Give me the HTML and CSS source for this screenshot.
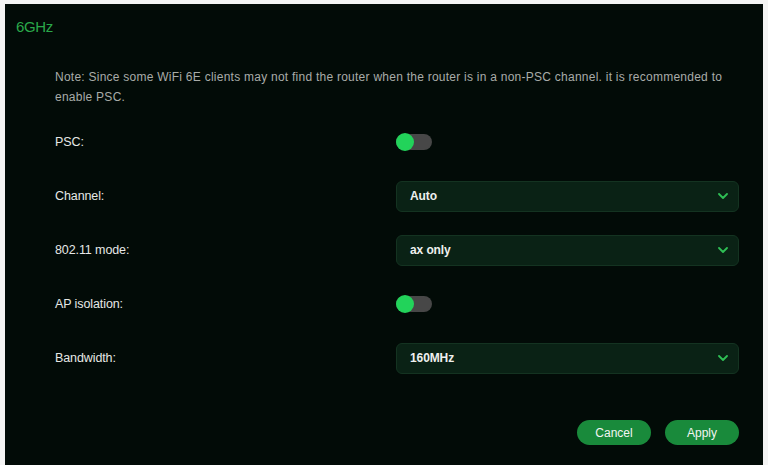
FILE: index.html
```html
<!DOCTYPE html>
<html>
<head>
<meta charset="utf-8">
<link rel="stylesheet" href="styles.css">
</head>
<body>
<div class="panel">
  <div class="header">6GHz</div>
  <div class="content">
    <p class="note">Note: Since some WiFi 6E clients may not find the router when the router is in a non-PSC channel. it is recommended to enable PSC.</p>
    <div class="row">
      <div class="label">PSC:</div>
      <div class="control"><span class="toggle"><span class="knob"></span></span></div>
    </div>
    <div class="row">
      <div class="label">Channel:</div>
      <div class="control"><div class="select"><span>Auto</span><svg class="chev" viewBox="0 0 10 6" width="10" height="6"><path d="M1 1l4 4 4-4" fill="none" stroke="#2fbf55" stroke-width="1.8" stroke-linecap="round" stroke-linejoin="round"/></svg></div></div>
    </div>
    <div class="row">
      <div class="label">802.11 mode:</div>
      <div class="control"><div class="select"><span>ax only</span><svg class="chev" viewBox="0 0 10 6" width="10" height="6"><path d="M1 1l4 4 4-4" fill="none" stroke="#2fbf55" stroke-width="1.8" stroke-linecap="round" stroke-linejoin="round"/></svg></div></div>
    </div>
    <div class="row">
      <div class="label">AP isolation:</div>
      <div class="control"><span class="toggle"><span class="knob"></span></span></div>
    </div>
    <div class="row">
      <div class="label">Bandwidth:</div>
      <div class="control"><div class="select"><span>160MHz</span><svg class="chev" viewBox="0 0 10 6" width="10" height="6"><path d="M1 1l4 4 4-4" fill="none" stroke="#2fbf55" stroke-width="1.8" stroke-linecap="round" stroke-linejoin="round"/></svg></div></div>
    </div>
    <div class="actions">
      <button class="btn">Cancel</button>
      <button class="btn">Apply</button>
    </div>
  </div>
</div>
</body>
</html>
```
FILE: styles.css
```css
html, body {
  margin: 0;
  padding: 0;
  background: #f4f4f4;
  height: 100%;
}
body {
  font-family: "Liberation Sans", Arial, sans-serif;
  padding: 4px 5px 0 5px;
  box-sizing: border-box;
}
.panel {
  background: #020b07;
  height: 100%;
  box-sizing: border-box;
  padding-top: 13px;
}
.header {
  color: #2aa84a;
  font-size: 15px;
  line-height: 20px;
  padding-left: 11px;
  letter-spacing: -0.4px;
}
.content {
  padding: 0 24px 0 50px;
}
.note {
  margin: 30px 0 8px 0;
  color: #a9aca9;
  font-size: 12px;
  line-height: 20px;
  letter-spacing: 0.25px;
  padding-right: 8px;
}
.row {
  display: flex;
  align-items: center;
  height: 54px;
}
.label {
  width: 341px;
  color: #e6e8e6;
  font-size: 12.5px;
  letter-spacing: -0.1px;
}
.control {
  flex: 1;
  display: flex;
  align-items: center;
}
.toggle {
  position: relative;
  display: inline-block;
  width: 36px;
  height: 16px;
  border-radius: 8px;
  background: #474747;
}
.knob {
  position: absolute;
  left: 0;
  top: -1px;
  width: 18px;
  height: 18px;
  border-radius: 50%;
  background: #22d35a;
}
.select {
  flex: 1;
  height: 31px;
  box-sizing: border-box;
  border: 1px solid #143321;
  background: #0a2215;
  border-radius: 6px;
  display: flex;
  align-items: center;
  justify-content: space-between;
  padding: 0 10px 0 13px;
  color: #eef0ee;
  font-size: 12px;
  font-weight: bold;
  letter-spacing: -0.1px;
}
.chev {
  display: block;
}
.actions {
  display: flex;
  justify-content: flex-end;
  gap: 14px;
  margin-top: 35px;
}
.btn {
  width: 74px;
  height: 25px;
  border: none;
  border-radius: 13px;
  background: #198a3b;
  color: #f2f4f2;
  font-family: "Liberation Sans", Arial, sans-serif;
  font-size: 12px;
  padding: 0;
}
```
